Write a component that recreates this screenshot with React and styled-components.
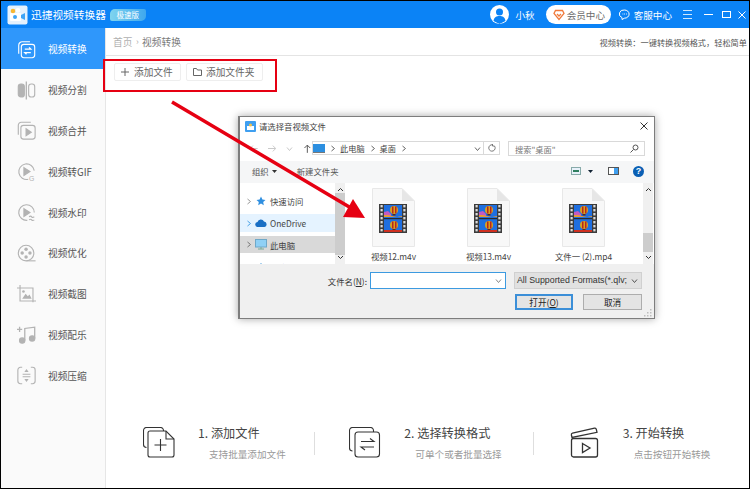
import React from 'react'
import styled, {createGlobalStyle} from 'styled-components'

const GlobalStyle = createGlobalStyle`
    html, body {
        margin: 0;
        padding: 0;
        background: #fff;
    }
    body {
        font-family: "Noto Sans CJK SC", "Liberation Sans", sans-serif;
    }
`
const Frame = styled.div`
    position: relative;
    box-sizing: border-box;
    width: 750px;
    height: 489px;
    border: 1px solid #000;
    overflow: hidden;
    display: flex;
    flex-direction: column;
    background: #fff;
`
const TitleBar = styled.header`
    flex: none;
    height: 27px;
    display: flex;
    align-items: center;
    padding-left: 6px;
    background: #0b83f6;
    color: #fff;
`
const AppName = styled.span`
    margin-left: 3px;
    font-size: 10.7px;
    white-space: nowrap;
`
const Badge = styled.span`
    margin-left: 4px;
    width: 36px;
    height: 12px;
    border-radius: 5px 2px 5px 2px;
    background: linear-gradient(90deg, #7fd4ee, #3fa8ee);
    color: #fff;
    font-size: 7.5px;
    line-height: 12px;
    text-align: center;
`
const TitleRight = styled.div`
    margin-left: auto;
    display: flex;
    align-items: center;
    padding-right: 3px;
`
const Avatar = styled.div`
    width: 19px;
    height: 19px;
    border-radius: 50%;
    background: #fff;
    overflow: hidden;
`
const TopLabel = styled.span`
    font-size: 9.6px;
    white-space: nowrap;
    margin-left: ${p => p.$gap}px;
`
const VipPill = styled.div`
    margin-left: 11px;
    width: 65px;
    height: 19px;
    box-sizing: border-box;
    padding-left: 7px;
    display: flex;
    align-items: center;
    border-radius: 10px;
    background: #fff;
    color: #6b6b6b;
    font-size: 9.6px;
`
const WinIcon = styled.svg`
    display: block;
    flex: none;
    margin-left: ${p => p.$gap}px;
`
const Body = styled.div`
    flex: 1;
    min-height: 0;
    display: flex;
`
const Sidebar = styled.nav`
    flex: none;
    width: 104px;
    border-right: 1px solid #e6e6e6;
    background: #fafafa;
`
const NavItem = styled.div`
    height: 40.8px;
    box-sizing: border-box;
    display: flex;
    align-items: center;
    padding: 2px 0 0 16px;
    background: ${p => (p.$active ? '#2f97fb' : 'transparent')};
    color: ${p => (p.$active ? '#fff' : '#555')};
    font-size: 9.7px;
`
const NavIconBox = styled.div`
    width: 19px;
    height: 19px;
    margin-right: 12px;
    color: ${p => (p.$active ? '#fff' : '#b3b3b3')};
    svg {
        display: block;
        width: 19px;
        height: 19px;
    }
`
const Main = styled.main`
    flex: 1;
    min-width: 0;
    display: flex;
    flex-direction: column;
`
const Crumbs = styled.div`
    flex: none;
    height: 27px;
    display: flex;
    align-items: center;
    padding: 0 2px 0 7px;
    border-bottom: 1px solid #e4e4e4;
    font-size: 9.7px;
    color: #7a7a7a;
`
const CrumbHome = styled.span`
    color: #b0b0b0;
`
const CrumbSep = styled.span`
    margin: 0 3.5px;
    color: #b0b0b0;
    font-size: 9px;
`
const Slogan = styled.span`
    margin-left: auto;
    font-size: 8.2px;
    color: #555;
`
const Toolbar = styled.div`
    flex: none;
    display: flex;
    gap: 5px;
    padding: 7px 0 0 8px;
`
const ToolButton = styled.div`
    height: 18px;
    width: ${p => p.$w}px;
    box-sizing: border-box;
    display: flex;
    align-items: center;
    padding-left: 6px;
    gap: ${p => p.$gap}px;
    border: 1px solid #eeeeee;
    border-radius: 2px;
    color: #666;
    font-size: 9.7px;
    white-space: nowrap;
`
const Steps = styled.section`
    margin-top: auto;
    height: 72px;
    display: flex;
    padding-left: 37px;
`
const Step = styled.div`
    display: flex;
    width: ${p => p.$w}px;
`
const StepIcon = styled.div`
    width: 32px;
    height: 31px;
    margin-top: 11px;
    margin-right: ${p => p.$gap}px;
    flex: none;
`
const StepTitle = styled.div`
    font-size: 12.2px;
    line-height: 16px;
    margin-top: 9px;
    color: #444;
    white-space: nowrap;
`
const StepSub = styled.div`
    margin: 7px 0 0 11px;
    font-size: 9.6px;
    line-height: 12px;
    color: #9a9a9a;
    white-space: nowrap;
`
const StepRule = styled.div`
    width: 1px;
    height: 23px;
    margin: 16px ${p => p.$r}px 0 0;
    background: #dedede;
    flex: none;
`
// red marks drawn on top of the screenshot
const RedBox = styled.div`
    position: absolute;
    left: 102px;
    top: 58px;
    width: 174px;
    height: 33px;
    box-sizing: border-box;
    border: 2px solid #e60012;
`
const ArrowLayer = styled.svg`
    position: absolute;
    left: 0;
    top: 0;
    z-index: 3;
    pointer-events: none;
`
const Dialog = styled.div`
    position: absolute;
    left: 237px;
    top: 115px;
    width: 417px;
    height: 203px;
    box-sizing: border-box;
    z-index: 2;
    display: flex;
    flex-direction: column;
    border: 1px solid #7d7d7d;
    border-left-width: 2px;
    background: #fff;
    box-shadow: 0 0 8px rgba(0, 0, 0, .35);
    color: #333;
    font-size: 8.4px;
`
const DialogTitle = styled.div`
    flex: none;
    height: 24px;
    box-sizing: border-box;
    display: flex;
    align-items: center;
    padding: 0 6px 6px 5px;
    gap: 3px;
    color: #444;
`
const CloseMark = styled.svg`
    margin-left: auto;
`
const AddressRow = styled.div`
    flex: none;
    height: 20px;
    display: flex;
    align-items: flex-start;
    padding-left: 9px;
    color: #aaa;
`
const NavArrows = styled.div`
    width: 63px;
    height: 14px;
    display: flex;
    align-items: center;
    gap: 10px;
`
const AddressBox = styled.div`
    width: 188px;
    height: 14px;
    box-sizing: border-box;
    display: flex;
    align-items: center;
    gap: 4px;
    border: 1px solid #d9d9d9;
    color: #444;
    font-size: 8.2px;
`
const AddressEnd = styled.div`
    margin-left: auto;
    display: flex;
    align-items: center;
    height: 100%;
    color: #666;
`
const RefreshCell = styled.div`
    height: 100%;
    margin-left: 2px;
    padding: 0 3px 0 4px;
    display: flex;
    align-items: center;
    border-left: 1px solid #d9d9d9;
`
const SearchBox = styled.div`
    margin-left: 8px;
    width: 137px;
    height: 15px;
    box-sizing: border-box;
    display: flex;
    align-items: center;
    justify-content: space-between;
    padding: 0 5px 0 6px;
    border: 1px solid #d9d9d9;
    color: #777;
    font-size: 8.2px;
`
const CommandBar = styled.div`
    flex: none;
    height: 22px;
    box-sizing: border-box;
    display: flex;
    align-items: center;
    padding: 0 10px 2px 12px;
    background: #f5f6f7;
    color: #555;
`
const CommandItem = styled.span`
    margin-right: ${p => p.$gap}px;
    display: flex;
    align-items: center;
    gap: 3px;
`
const CommandEnd = styled.div`
    margin-left: auto;
    display: flex;
    align-items: center;
`
const HelpDot = styled.div`
    width: 11px;
    height: 11px;
    margin-left: 14px;
    border-radius: 50%;
    background: #0a5fb4;
    color: #fff;
    font: bold 9px/11px "Liberation Sans", sans-serif;
    text-align: center;
`
const Browser = styled.div`
    flex: none;
    height: 81px;
    display: flex;
    overflow: hidden;
`
const TreePane = styled.div`
    width: 95px;
    flex: none;
    padding-top: 9px;
`
const TreeRow = styled.div`
    height: ${p => p.$h}px;
    margin-bottom: ${p => p.$mb}px;
    display: flex;
    align-items: center;
    gap: 3px;
    padding-left: 5px;
    background: ${p => p.$bg || 'transparent'};
    color: ${p => p.$color || '#444'};
    font-size: 8.4px;
    white-space: nowrap;
`
const TreeIcon = styled.div`
    width: 12px;
    flex: none;
    display: flex;
    justify-content: center;
`
const TreeIndent = styled.div`
    width: 7px;
    flex: none;
`
const ScrollBar = styled.div`
    flex: none;
    width: 10px;
    display: flex;
    flex-direction: column;
    justify-content: space-between;
    align-items: center;
    background: #f0f0f0;
    position: relative;
`
const ScrollThumb = styled.div`
    position: absolute;
    left: 0;
    right: 0;
    top: ${p => p.$top}px;
    height: ${p => p.$h}px;
    background: #cdcdcd;
`
const ScrollGlyph = styled.svg`
    display: block;
    margin: 4px 0;
    position: relative;
`
const FileGrid = styled.div`
    flex: 1;
    display: flex;
    padding: 5px 0 0 27px;
    gap: 52px;
`
const FileCell = styled.div`
    width: 43px;
    display: flex;
    flex-direction: column;
    align-items: center;
`
const FileName = styled.div`
    margin-top: 3px;
    font-size: 8.4px;
    line-height: 12px;
    color: #444;
    white-space: nowrap;
`
const RightGutter = styled.div`
    flex: none;
    width: 1px;
`
const DialogFoot = styled.div`
    flex: 1;
    background: #f0f0f0;
    display: grid;
    grid-template-columns: 130px 136px 136px;
    grid-template-rows: 17px 16px;
    row-gap: 5px;
    padding-top: 8px;
    position: relative;
`
const FootLabel = styled.div`
    align-self: center;
    justify-self: end;
    padding-right: 3px;
    color: #333;
    font-size: 8.4px;
`
const NameInput = styled.div`
    background: #fff;
    border: 1px solid #3c9ae0;
    box-sizing: border-box;
    display: flex;
    align-items: center;
    justify-content: flex-end;
    padding-right: 3px;
`
const TypeSelect = styled.div`
    margin-left: 8px;
    box-sizing: border-box;
    border: 1px solid #d0d0d0;
    background: #e1e1e1;
    display: flex;
    align-items: center;
    justify-content: space-between;
    padding: 0 3px 0 2px;
    font: 8.8px/1 "Liberation Sans", sans-serif;
    color: #333;
    white-space: nowrap;
    overflow: hidden;
`
const FootButtons = styled.div`
    grid-column: 3;
    margin-left: 9px;
    display: flex;
    gap: 10px;
`
const DlgButton = styled.div`
    width: ${p => p.$w}px;
    box-sizing: border-box;
    height: 16px;
    display: flex;
    align-items: center;
    justify-content: center;
    background: #e4e4e4;
    border: ${p => (p.$primary ? '2px solid #3c8fd8' : '1px solid #adadad')};
    color: #222;
    font-size: 8.6px;
`
const Grip = styled.svg`
    position: absolute;
    right: 2px;
    bottom: 1px;
`

const Logo = () => (
    <svg width="21" height="20" viewBox="0 0 21 20">
        <rect x="0.5" y="0.5" width="20" height="19" rx="2" fill="#e4f1fd" />
        <rect x="3" y="8" width="11" height="8" rx="1" fill="#fff" />
        <path d="M14 10l4-2v7l-4-2z" fill="#3fa4f6" />
        <circle cx="6" cy="6" r="2.3" fill="#f7b733" />
        <circle cx="11" cy="5.4" r="2.3" fill="#fff" />
        <circle cx="8" cy="12" r="2" fill="#3fa4f6" />
    </svg>
)

const Icons = {
    convert: (
        <svg viewBox="0 0 22 22" fill="none" stroke="currentColor" strokeWidth="1.3">
            <path d="M2 16V6a4 4 0 0 1 4-4h9" />
            <rect x="5" y="5" width="15.500" height="15.500" rx="3" />
            <path d="M9 10.500h7l-2-2M16 14.500H9l2 2" strokeWidth="1.500" />
        </svg>
    ),
    split: (
        <svg viewBox="0 0 22 22" fill="none" stroke="currentColor" strokeWidth="1.3">
            <rect x="1.500" y="3.500" width="7" height="15" rx="3" fill="currentColor" />
            <path d="M10.800 .5v21" strokeWidth="1.500" />
            <rect x="13.500" y="3.500" width="7" height="15" rx="3" />
        </svg>
    ),
    merge: (
        <svg viewBox="0 0 22 22" fill="none" stroke="currentColor" strokeWidth="1.3">
            <path d="M1.500 16V5a3.500 3.500 0 0 1 3.500-3.500h11" />
            <rect x="4.500" y="5" width="16.500" height="16" rx="3" />
            <path d="M10.500 9l6 4-6 4z" fill="currentColor" />
        </svg>
    ),
    gif: (
        <svg viewBox="0 0 22 22" fill="none" stroke="currentColor" strokeWidth="1.3">
            <path d="M13 20a9 9 0 1 1 7-10" />
            <path d="M8 6.500l7 4.500-7 4.500z" fill="currentColor" />
            <text x="14" y="21.500" fontSize="8" fill="currentColor" stroke="none" fontFamily="Liberation Sans">G</text>
        </svg>
    ),
    mark: (
        <svg viewBox="0 0 22 22" fill="none" stroke="currentColor" strokeWidth="1.3">
            <path d="M12 20a9 9 0 1 1 8-9" />
            <path d="M8 6.500l7 4.500-7 4.500z" fill="currentColor" />
            <path d="M14 16q2-1.500 3 0t3 0M14 19.500q2-1.500 3 0t3 0" />
        </svg>
    ),
    optimize: (
        <svg viewBox="0 0 22 22" fill="none" stroke="currentColor" strokeWidth="1.3">
            <circle cx="10.500" cy="10.500" r="9" />
            <path d="M11 19.500h10.500" />
            <g fill="currentColor" stroke="none">
                <circle cx="10.500" cy="6" r="2" />
                <circle cx="10.500" cy="15" r="2" />
                <circle cx="6" cy="10.500" r="2" />
                <circle cx="15" cy="10.500" r="2" />
            </g>
        </svg>
    ),
    capture: (
        <svg viewBox="0 0 22 22" fill="none" stroke="currentColor" strokeWidth="1.3">
            <path d="M0 3.500h18.500V20M3.500 0v18.500H22" />
            <path d="M6 16l4-6 2.500 3 2-2 2.500 5z" fill="currentColor" stroke="none" />
            <circle cx="7.500" cy="7.500" r="1.500" fill="currentColor" stroke="none" />
        </svg>
    ),
    music: (
        <svg viewBox="0 0 22 22" fill="none" stroke="currentColor" strokeWidth="1.500">
            <path d="M0 5h6M3 2v6" />
            <path d="M9 18V4l11.500-1.500v13" />
            <circle cx="6" cy="18" r="3" fill="currentColor" />
            <circle cx="17.500" cy="15.500" r="3" fill="currentColor" />
        </svg>
    ),
    compress: (
        <svg viewBox="0 0 22 22" fill="none" stroke="currentColor" strokeWidth="1.300">
            <path d="M6 1.500H4a3 3 0 0 0-3 3v13a3 3 0 0 0 3 3h2M16 1.500h2a3 3 0 0 1 3 3v13a3 3 0 0 1-3 3h-2" />
            <path d="M6.500 9.500h9M6.500 12.500h9" />
            <path d="M11 3.500l-2.500 3.500h5zM11 18.500l-2.500-3.500h5z" fill="currentColor" stroke="none" />
        </svg>
    ),
}

const NAV = [
    ['convert', '视频转换'],
    ['split', '视频分割'],
    ['merge', '视频合并'],
    ['gif', '视频转GIF'],
    ['mark', '视频水印'],
    ['optimize', '视频优化'],
    ['capture', '视频截图'],
    ['music', '视频配乐'],
    ['compress', '视频压缩'],
]

const Chevron = ({dir = 'right', color = '#777', size = 7}) => {
    const d = {
        right: 'M2.500 1l3 2.500-3 2.500',
        down: 'M1 2.500l2.500 3 2.500-3',
        up: 'M1 5l2.500-3 2.500 3',
    }[dir]
    return (
        <svg width={size} height={size} viewBox="0 0 7 7" fill="none" stroke={color} strokeWidth="1" style={{flex: 'none'}}>
            <path d={d} />
        </svg>
    )
}

const Balloon = ({y}) => (
    <g>
        <circle cx="22" cy={y} r="4" fill="#d9a020" />
        <path d={`M20 ${y - 3.500}h1.500v7H20zM23 ${y - 3.500}h1.500v7H23z`} fill="#b8261c" />
        <rect x="20.500" y={y + 4} width="3" height="1.500" fill="#5a2a1a" />
    </g>
)

// film strip thumbnail used by the media file icons
const FilmFile = () => (
    <svg width="43" height="59" viewBox="0 0 43 59">
        <path d="M0.500 0.500H30L42.500 13V58.500H0.500z" fill="#f8f8f8" stroke="#e8e8e8" />
        <path d="M30 0.500V13H42.500z" fill="#e6e6e6" />
        <rect x="7" y="16" width="28" height="29" fill="#3c3c3c" />
        <rect x="12" y="17" width="18" height="27" fill="#1f6fe0" />
        <path d="M12 24l4-1 3 3v3H12z" fill="#c45ac0" />
        <path d="M12 29h18v-1l-5 1-5-1-4-1-4 0z" fill="#e89a30" />
        <rect x="12" y="30" width="18" height="1.200" fill="#2a2a2a" />
        <Balloon y={22} />
        <Balloon y={37} />
        <rect x="12" y="42" width="18" height="2" fill="#d03020" />
        <g fill="#dcdcdc">
            {[17, 21, 25, 29, 33, 37, 41].map(y => (
                <React.Fragment key={y}>
                    <rect x="8.500" y={y} width="2.200" height="2.400" />
                    <rect x="31.300" y={y} width="2.200" height="2.400" />
                </React.Fragment>
            ))}
        </g>
    </svg>
)

const FILES = ['视频12.m4v', '视频13.m4v', '文件一 (2).mp4']

function App() {
    return (
        <Frame>
            <GlobalStyle />
            <TitleBar>
                <Logo />
                <AppName>迅捷视频转换器</AppName>
                <Badge>极速版</Badge>
                <TitleRight>
                    <Avatar>
                        <svg width="19" height="19" viewBox="0 0 19 19">
                            <circle cx="9.500" cy="7" r="3.500" fill="#0b83f6" />
                            <path d="M3.500 16c.5-4 3-5 6-5s5.500 1 6 5l-6 3z" fill="#0b83f6" />
                        </svg>
                    </Avatar>
                    <TopLabel $gap={6}>小秋</TopLabel>
                    <VipPill>
                        <svg width="12" height="12" viewBox="0 0 12 12" fill="none" stroke="#f0793a" strokeWidth="1.300" style={{marginRight: 2}}>
                            <path d="M2.500 1.500h7l1.500 3-5 6-5-6z" />
                            <path d="M4 5l2 2 2-2" />
                        </svg>
                        会员中心
                    </VipPill>
                    <WinIcon $gap={8} width="11" height="11" viewBox="0 0 11 11" fill="none" stroke="#fff">
                        <path d="M5.500 1a4.500 4 0 0 1 0 8.200L3 10.500V8.600A4.500 4 0 0 1 5.500 1z" />
                        <path d="M3.500 5h.8M5.200 5h.8M7 5h.8" />
                    </WinIcon>
                    <TopLabel $gap={4}>客服中心</TopLabel>
                    <WinIcon $gap={11} width="9" height="9" viewBox="0 0 9 9" stroke="#fff" strokeWidth=".8">
                        <path d="M0 .5h9M0 4.500h9M0 8.500h9" />
                    </WinIcon>
                    <WinIcon $gap={12} width="9" height="9" viewBox="0 0 9 9" stroke="#fff">
                        <path d="M0 4.500h9" />
                    </WinIcon>
                    <WinIcon $gap={9} width="9" height="7" viewBox="0 0 9 7" fill="none" stroke="#fff">
                        <rect x=".5" y=".5" width="8" height="6" />
                    </WinIcon>
                    <WinIcon $gap={7} width="8" height="8" viewBox="0 0 8 8" stroke="#fff">
                        <path d="M.5.5l7 7M7.500.5l-7 7" />
                    </WinIcon>
                </TitleRight>
            </TitleBar>
            <Body>
                <Sidebar>
                    {NAV.map(([key, label], i) => (
                        <NavItem key={key} $active={i === 0}>
                            <NavIconBox $active={i === 0}>{Icons[key]}</NavIconBox>
                            {label}
                        </NavItem>
                    ))}
                </Sidebar>
                <Main>
                    <Crumbs>
                        <CrumbHome>首页</CrumbHome>
                        <CrumbSep>›</CrumbSep>
                        视频转换
                        <Slogan>视频转换：一键转换视频格式，轻松简单</Slogan>
                    </Crumbs>
                    <Toolbar>
                        <ToolButton $w={67} $gap={5}>
                            <svg width="8" height="8" viewBox="0 0 8 8" stroke="#666"><path d="M4 0v8M0 4h8" /></svg>
                            添加文件
                        </ToolButton>
                        <ToolButton $w={77} $gap={4}>
                            <svg width="9" height="8" viewBox="0 0 9 8" fill="none" stroke="#666"><path d="M.5 7.500V.5h3l1 1.500h4v5.500z" /></svg>
                            添加文件夹
                        </ToolButton>
                    </Toolbar>
                    <Steps>
                        <Step $w={172}>
                            <StepIcon $gap={23}>
                                <svg width="32" height="31" viewBox="0 0 32 31" fill="none" stroke="#333" strokeWidth="1.100">
                                    <path d="M3.500 20.500a3 3 0 0 1-3-3V3.500a3 3 0 0 1 3-3h14a3 3 0 0 1 3 3V4" />
                                    <path d="M7 4h16l8 8v16a2 2 0 0 1-2 2H7a2 2 0 0 1-2-2V6a2 2 0 0 1 2-2z" fill="#fff" />
                                    <path d="M23 4v8h8M17.500 12v12M11.500 18h12" />
                                </svg>
                            </StepIcon>
                            <div>
                                <StepTitle>1. 添加文件</StepTitle>
                                <StepSub>支持批量添加文件</StepSub>
                            </div>
                        </Step>
                        <StepRule $r={34} />
                        <Step $w={184}>
                            <StepIcon $gap={23}>
                                <svg width="32" height="31" viewBox="0 0 32 31" fill="none" stroke="#333" strokeWidth="1.100">
                                    <path d="M3.500 24a3 3 0 0 1-3-3V3.500a3 3 0 0 1 3-3h18a3 3 0 0 1 3 3V5" />
                                    <rect x="6" y="5" width="24.500" height="25" rx="3" fill="#fff" />
                                    <path d="M12 14.500h13l-4-3M25 20H12l4 3" />
                                </svg>
                            </StepIcon>
                            <div>
                                <StepTitle>2. 选择转换格式</StepTitle>
                                <StepSub>可单个或者批量选择</StepSub>
                            </div>
                        </Step>
                        <StepRule $r={36} />
                        <Step $w={180}>
                            <StepIcon $gap={21}>
                                <svg width="32" height="31" viewBox="0 0 32 31" fill="none" stroke="#333" strokeWidth="1.300">
                                    <path d="M2 10.500l-.6-2.500a1.500 1.500 0 0 1 1.100-1.800L24.500 1.200a1.500 1.500 0 0 1 1.800 1.100l.7 3z" />
                                    <rect x="1.500" y="11.500" width="26" height="18.500" rx="2" />
                                    <path d="M12.500 16.500l7.500 4.500-7.500 4.500z" />
                                </svg>
                            </StepIcon>
                            <div>
                                <StepTitle>3. 开始转换</StepTitle>
                                <StepSub>点击按钮开始转换</StepSub>
                            </div>
                        </Step>
                    </Steps>
                </Main>
            </Body>

            <RedBox />

            <Dialog>
                <DialogTitle>
                    <svg width="11" height="11" viewBox="0 0 11 11">
                        <rect width="11" height="11" rx="1" fill="#3f9ff0" />
                        <rect x="2" y="5" width="7" height="4" fill="#fff" />
                        <circle cx="5.500" cy="4" r="1.500" fill="#f6c34a" />
                    </svg>
                    请选择音视频文件
                    <CloseMark width="8" height="8" viewBox="0 0 8 8" stroke="#333"><path d="M.5.5l7 7M7.500.5l-7 7" /></CloseMark>
                </DialogTitle>
                <AddressRow>
                    <NavArrows>
                        <svg width="9" height="9" viewBox="0 0 9 9" fill="none" stroke="#c8c8c8"><path d="M9 4.500H1M4 1.500l-3 3 3 3" /></svg>
                        <svg width="9" height="9" viewBox="0 0 9 9" fill="none" stroke="#c8c8c8"><path d="M0 4.500h8M5 1.500l3 3-3 3" /></svg>
                        <Chevron dir="down" color="#c8c8c8" />
                        <svg width="9" height="9" viewBox="0 0 9 9" fill="none" stroke="#555"><path d="M4.500 9V1M1.500 4l3-3 3 3" /></svg>
                    </NavArrows>
                    <AddressBox>
                        <svg width="12" height="9" viewBox="0 0 12 9"><rect width="12" height="8" fill="#2c8fe0" /><rect y="8" width="12" height="1" fill="#777" /></svg>
                        <Chevron color="#666" />
                        此电脑
                        <Chevron color="#666" />
                        桌面
                        <Chevron color="#666" />
                        <AddressEnd>
                            <Chevron dir="down" color="#666" />
                            <RefreshCell>
                                <svg width="8" height="8" viewBox="0 0 8 8" fill="none" stroke="#777"><path d="M6.500 2a3.200 3.200 0 1 1-2-1.200M4.500 0v2h2" /></svg>
                            </RefreshCell>
                        </AddressEnd>
                    </AddressBox>
                    <SearchBox>
                        搜索"桌面"
                        <svg width="9" height="9" viewBox="0 0 9 9" fill="none" stroke="#555"><circle cx="5.500" cy="3.500" r="2.500" /><path d="M3.500 5.500l-3 3" /></svg>
                    </SearchBox>
                </AddressRow>
                <CommandBar>
                    <CommandItem $gap={20}>
                        组织
                        <svg width="5" height="3" viewBox="0 0 5 3"><path d="M0 0h5L2.500 3z" fill="#333" /></svg>
                    </CommandItem>
                    <CommandItem>新建文件夹</CommandItem>
                    <CommandEnd>
                        <svg width="10" height="8" viewBox="0 0 10 8"><rect x=".5" y=".5" width="9" height="7" fill="#e8f1fa" stroke="#8aa" /><rect x="2" y="3" width="6" height="2" fill="#2f7f5f" /></svg>
                        <svg width="5" height="3" viewBox="0 0 5 3" style={{marginLeft: 7}}><path d="M0 0h5L2.500 3z" fill="#123" /></svg>
                        <svg width="11" height="8" viewBox="0 0 11 8" style={{marginLeft: 15}}><rect x=".5" y=".5" width="10" height="7" fill="#fff" stroke="#555" /><rect x="6" y="1" width="4" height="6" fill="#3f9ff0" /></svg>
                        <HelpDot>?</HelpDot>
                    </CommandEnd>
                </CommandBar>
                <Browser>
                    <TreePane>
                        <TreeRow $h={18} $mb={4}>
                            <Chevron color="#999" />
                            <TreeIcon>
                                <svg width="10" height="10" viewBox="0 0 10 10"><path d="M5 .5l1.400 3 3.100.4-2.300 2.100.6 3.200L5 7.600 2.200 9.200l.6-3.200L.5 3.900l3.100-.4z" fill="#2f8fe0" /></svg>
                            </TreeIcon>
                            快速访问
                        </TreeRow>
                        <TreeRow $h={18} $mb={4} $bg="#e5f3ff">
                            <Chevron color="#4aa3e8" />
                            <TreeIcon>
                                <svg width="12" height="8" viewBox="0 0 12 8"><path d="M3 8a2.500 2.500 0 0 1-.5-5A3.500 3.500 0 0 1 9 2.500 2.800 2.800 0 0 1 9.500 8z" fill="#1a6fc4" /></svg>
                            </TreeIcon>
                            OneDrive
                        </TreeRow>
                        <TreeRow $h={17} $mb={5} $bg="#d9d9d9">
                            <Chevron color="#777" />
                            <TreeIcon>
                                <svg width="12" height="11" viewBox="0 0 12 11"><rect x=".5" y=".5" width="11" height="7.500" fill="#8fd0f5" stroke="#6fa8c8" /><path d="M3 10h6M6 8v2" stroke="#7a9" /></svg>
                            </TreeIcon>
                            此电脑
                        </TreeRow>
                        <TreeRow $h={18} $mb={0}>
                            <TreeIndent />
                            <TreeIcon>
                                <svg width="12" height="9" viewBox="0 0 12 9"><path d="M6 0l3 3H3z" fill="#5aa7e0" /></svg>
                            </TreeIcon>
                            网络
                        </TreeRow>
                    </TreePane>
                    <ScrollBar>
                        <ScrollThumb $top={10} $h={62} />
                        <ScrollGlyph width="7" height="5" viewBox="0 0 7 5" fill="none" stroke="#333"><path d="M1 4l2.500-2.500L6 4" /></ScrollGlyph>
                        <ScrollGlyph width="7" height="5" viewBox="0 0 7 5" fill="none" stroke="#333"><path d="M1 1l2.500 2.500L6 1" /></ScrollGlyph>
                    </ScrollBar>
                    <FileGrid>
                        {FILES.map(name => (
                            <FileCell key={name}>
                                <FilmFile />
                                <FileName>{name}</FileName>
                            </FileCell>
                        ))}
                    </FileGrid>
                    <ScrollBar>
                        <ScrollThumb $top={50} $h={19} />
                        <ScrollGlyph width="7" height="5" viewBox="0 0 7 5" fill="none" stroke="#333"><path d="M1 4l2.500-2.500L6 4" /></ScrollGlyph>
                        <ScrollGlyph width="7" height="5" viewBox="0 0 7 5" fill="none" stroke="#333"><path d="M1 1l2.500 2.500L6 1" /></ScrollGlyph>
                    </ScrollBar>
                    <RightGutter />
                </Browser>
                <DialogFoot>
                    <FootLabel>文件名(<u>N</u>):</FootLabel>
                    <NameInput><Chevron dir="down" color="#888" /></NameInput>
                    <TypeSelect>
                        All Supported Formats(*.qlv;
                        <Chevron dir="down" color="#555" />
                    </TypeSelect>
                    <FootButtons>
                        <DlgButton $w={58} $primary>打开(<u>O</u>)</DlgButton>
                        <DlgButton $w={59}>取消</DlgButton>
                    </FootButtons>
                    <Grip width="8" height="8" viewBox="0 0 8 8" fill="#bdbdbd">
                        <path d="M6 0h1.500v1.500H6zM3 3h1.500v1.500H3zM6 3h1.500v1.500H6zM0 6h1.500v1.500H0zM3 6h1.500v1.500H3zM6 6h1.500v1.500H6z" />
                    </Grip>
                </DialogFoot>
            </Dialog>

            <ArrowLayer width="748" height="487" viewBox="1 1 748 487">
                <path d="M172 102L351 208" stroke="#e60012" strokeWidth="3.500" fill="none" />
                <path d="M365 218L343 217L353 199z" fill="#e60012" />
            </ArrowLayer>
        </Frame>
    )
}

export default App
